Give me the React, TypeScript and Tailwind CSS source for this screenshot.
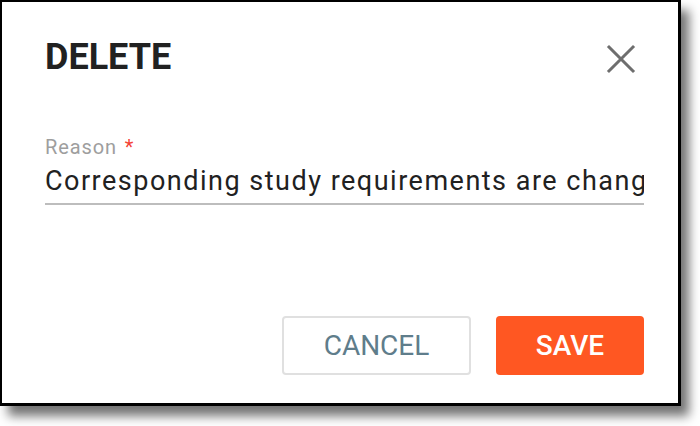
import React from "react";

export default function App() {
  return (
    <div className="w-[700px] h-[426px] bg-white" style={{ fontFamily: "Roboto, 'Liberation Sans', sans-serif" }}>
      <div className="w-[681px] h-[406px] bg-white border-l-2 border-t-2 border-r-[3px] border-b-[3px] border-black shadow-[8px_10px_10px_rgba(0,0,0,0.55)] flex flex-col pl-[43px] pr-[34px] pt-[36px] pb-[28px]">
        <div className="flex items-start justify-between">
          <h1 className="text-[36px] leading-[38px] font-bold text-[#212121]">DELETE</h1>
          <button className="mt-[6px] mr-[8px] w-[30px] h-[30px] flex items-center justify-center">
            <svg width="30" height="30" viewBox="0 0 30 30">
              <path d="M3 3 L27 27 M27 3 L3 27" stroke="#6e6e6e" strokeWidth="3" strokeLinecap="square" />
            </svg>
          </button>
        </div>
        <div className="mt-[61px] flex flex-col">
          <label className="text-[20px] leading-[20px] text-[#9e9e9e] tracking-[0.9px]">
            Reason <span className="ml-[2px] text-[#f44336]">*</span>
          </label>
          <div className="mt-[11px] border-b-2 border-[#bdbdbd] overflow-hidden whitespace-nowrap pb-[6px]">
            <span className="text-[27px] leading-[27px] text-[#212121] tracking-[1.5px]">
              Corresponding study requirements are changed
            </span>
          </div>
        </div>
        <div className="mt-auto flex justify-end gap-[25px]">
          <button className="w-[189px] h-[59px] rounded-[4px] border-2 border-[#e0e0e0] bg-white text-[28px] text-[#5f7d8b] font-normal">
            CANCEL
          </button>
          <button className="w-[148px] h-[59px] rounded-[4px] bg-[#ff5722] text-[28px] text-white font-medium">
            SAVE
          </button>
        </div>
      </div>
    </div>
  );
}
